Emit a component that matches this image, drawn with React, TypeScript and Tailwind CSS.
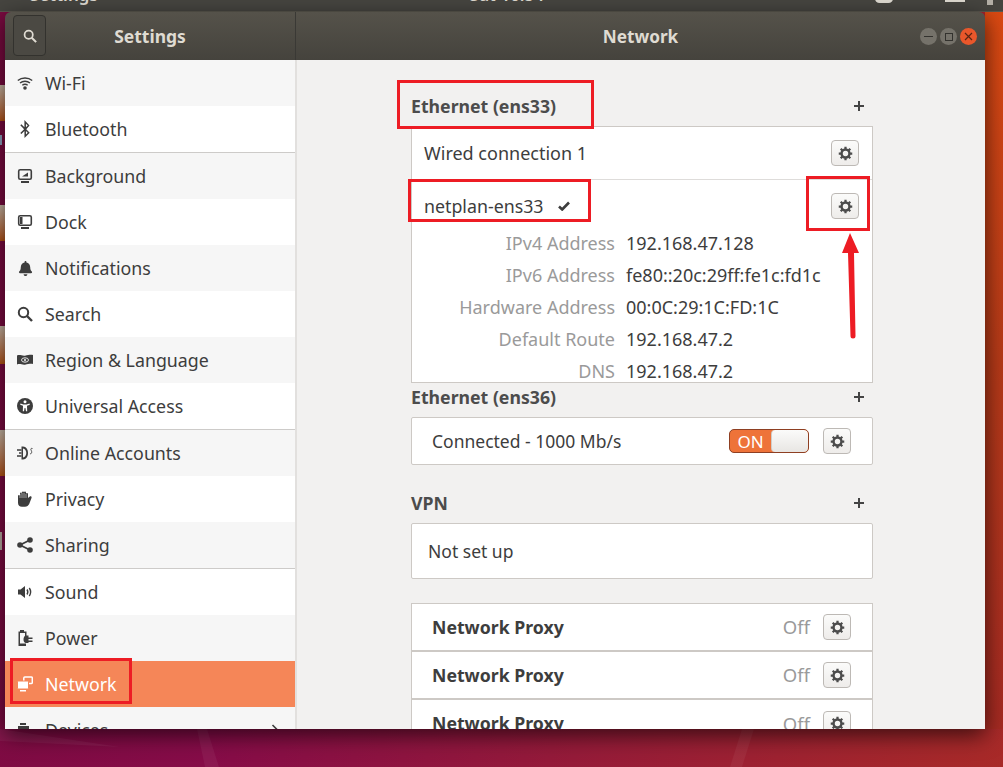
import type { ReactNode } from 'react';
import { FaBell, FaBluetoothB } from 'react-icons/fa';

const FONT = "font-['Noto_Sans',sans-serif]";

const Svg = ({ children, size = 16 }: { children: ReactNode; size?: number }) => (
  <svg width={size} height={size} viewBox="0 0 16 16" fill="currentColor">{children}</svg>
);

const Gear = () => (
  <Svg size={15}>
    <circle cx="8" cy="8" r="4.2" fill="none" stroke="currentColor" strokeWidth="2.6" />
    <g stroke="currentColor" strokeWidth="2.4">
      <path d="M8 .8v3M8 12.2v3M.8 8h3M12.2 8h3M2.9 2.9l2.1 2.1M11 11l2.1 2.1M13.1 2.9 11 5M5 11l-2.1 2.1" />
    </g>
  </Svg>
);

const SearchIcon = ({ size = 16 }: { size?: number }) => (
  <Svg size={size}>
    <circle cx="6.500" cy="6.500" r="4.700" fill="none" stroke="currentColor" strokeWidth="2" />
    <path d="M10 10l5 5" stroke="currentColor" strokeWidth="2.400" />
  </Svg>
);

const WifiIcon = () => (
  <Svg>
    <g fill="none" stroke="currentColor" strokeWidth="1.400">
      <path d="M.8 5.500c4-3.400 10.400-3.400 14.400 0" />
      <path d="M3 8c2.800-2.300 7.200-2.300 10 0" />
      <path d="M5.300 10.300c1.500-1.100 3.900-1.100 5.400 0" />
    </g>
    <circle cx="8" cy="13" r="1.800" />
  </Svg>
);

const HandIcon = () => (
  <Svg>
    <path d="M1 5a1 1 0 0 1 2 0V2.500a1 1 0 0 1 2 0V1.500a1 1 0 0 1 2 0V1.500a1 1 0 0 1 2 0v1.500a1 1 0 0 1 2 0v4l1.800-1.400c.8-.7 2.400.2 1.700 1.300L12.200 13c-.8 1.500-2.200 2.800-4.200 2.800H5c-2.500 0-4-1.500-4-4z" />
    <path d="M3 3v4M5 2v5M7 2v5M9 3v4" stroke="#fff" strokeWidth=".5" />
  </Svg>
);

const ShareIcon = () => (
  <Svg>
    <path d="M13 3 3 8l10 5" fill="none" stroke="currentColor" strokeWidth="1.800" />
    <circle cx="13" cy="3" r="2.800" />
    <circle cx="3" cy="8" r="2.800" />
    <circle cx="13" cy="13" r="2.800" />
  </Svg>
);

const SoundIcon = () => (
  <Svg>
    <path d="M1 5.500h2.500L8 2v12l-4.500-3.500H1z" />
    <path d="M10 5.500c1 1.500 1 3.500 0 5M12.300 4c1.600 2.400 1.600 5.600 0 8" fill="none" stroke="currentColor" strokeWidth="1.400" />
  </Svg>
);

const Monitor = ({ inner }: { inner: ReactNode }) => (
  <Svg>
    <rect x="1.700" y="1.700" width="12.600" height="9.600" rx="1.500" fill="none" stroke="currentColor" strokeWidth="1.600" />
    {inner}
    <path d="M4 13h8v2H4z" />
  </Svg>
);

const RegionIcon = () => (
  <Svg>
    <path d="M0 3.500c3-1.200 5 .6 8 .2s5-1.200 8-.7v9c-3-.5-5 .3-8 .7s-5-1.400-8-.2z" />
    <ellipse cx="8" cy="8" rx="3.500" ry="2.200" fill="none" stroke="#f6f6f6" strokeWidth=".9" />
    <circle cx="8" cy="8" r="1" fill="#f6f6f6" />
  </Svg>
);

const AccessIcon = () => (
  <Svg>
    <circle cx="8" cy="8" r="8" />
    <circle cx="8" cy="3.800" r="1.500" fill="#fff" />
    <path d="M3.500 5.600 6.400 6.400h3.200l2.900-.8.300 1.200-2.800 1 .2 5.400H9L8.400 10h-.8L7 13.200H5.800L6 7.800l-2.800-1z" fill="#fff" />
  </Svg>
);

const AccountsIcon = () => (
  <Svg>
    <path d="M4.500 1.500h1.500c3.200 0 5 3 5 6.500s-1.800 6.500-5 6.500H4.500z" />
    <path d="M6 3.500c2 .4 3.300 2.300 3.300 4.500S8 12.100 6 12.500z" fill="#f6f6f6" />
    <path d="M0 5h4.500M2 8h2.500M0 11h4.500" stroke="currentColor" strokeWidth="1.400" />
    <path d="M15.500 3.500c-1.500-.5-2 .5-1.500 1.500s1 2 .5 3-1 .8-1.500.5" fill="none" stroke="currentColor" strokeWidth=".9" />
  </Svg>
);

const PowerIcon = () => (
  <Svg>
    <path d="M3 0h4v1.500h2.500V6H8V3H3v10.500h6V16H1.500V1.500H3z" />
    <path d="M9 6.500h2.500v2h4V10h-4v1.500h4V13h-4v1H9c-1.500 0-2.500-1.500-2.500-3.500S7.500 6.500 9 6.500z" transform="translate(0 -1)" />
  </Svg>
);

const NetworkIcon = () => (
  <Svg>
    <rect x="6.800" y="1" width="8.500" height="6.500" rx="1" fill="none" stroke="currentColor" strokeWidth="1.500" />
    <path d="M1.500 5h9a1 1 0 0 1 1 1v6a1 1 0 0 1-1 1h-9a1 1 0 0 1-1-1V6a1 1 0 0 1 1-1z" stroke="#f58658" strokeWidth="1" />
    <path d="M3 14h6v1.500H3z" />
  </Svg>
);

const DevicesIcon = () => (
  <Svg>
    <path d="M3 1h6v2H3zM1 4h11v6H1zM3 11h12v3H3z" />
  </Svg>
);

const NAV: { name: string; icon: ReactNode; bg: string; sep?: boolean }[] = [
  { name: 'Wi-Fi', icon: <WifiIcon />, bg: 'bg-[#f6f6f6]' },
  { name: 'Bluetooth', icon: <FaBluetoothB size={18} />, bg: 'bg-white', sep: true },
  { name: 'Background', icon: <Monitor inner={<path d="M5 8.500h6V4.500z" />} />, bg: 'bg-[#f6f6f6]' },
  { name: 'Dock', icon: <Monitor inner={<path d="M3 3h2.500v7H3z" />} />, bg: 'bg-white' },
  { name: 'Notifications', icon: <FaBell size={15} />, bg: 'bg-[#f6f6f6]' },
  { name: 'Search', icon: <SearchIcon />, bg: 'bg-white' },
  { name: 'Region & Language', icon: <RegionIcon />, bg: 'bg-[#f6f6f6]' },
  { name: 'Universal Access', icon: <AccessIcon />, bg: 'bg-white', sep: true },
  { name: 'Online Accounts', icon: <AccountsIcon />, bg: 'bg-[#f6f6f6]' },
  { name: 'Privacy', icon: <HandIcon />, bg: 'bg-white' },
  { name: 'Sharing', icon: <ShareIcon />, bg: 'bg-[#f6f6f6]', sep: true },
  { name: 'Sound', icon: <SoundIcon />, bg: 'bg-white' },
  { name: 'Power', icon: <PowerIcon />, bg: 'bg-[#f6f6f6]' },
  { name: 'Network', icon: <NetworkIcon />, bg: 'bg-[#f58658]' },
];

const GearButton = () => (
  <div className="flex h-[26px] w-[28px] shrink-0 items-center justify-center rounded-[4px] border border-[#bdb9b5] bg-gradient-to-b from-[#fbfbfa] to-[#eeecea] text-[#4c4c4c]">
    <Gear />
  </div>
);

const SectionTitle = ({ title }: { title: string }) => (
  <div className="flex items-center justify-between pr-[9px]">
    <span className="text-[17.700px] font-bold leading-[20px] text-[#4c4c4c]">{title}</span>
    <span className="h-[10px] w-[10px] bg-[linear-gradient(#444,#444),linear-gradient(#444,#444)] bg-[length:100%_2px,2px_100%] bg-center bg-no-repeat" />
  </div>
);

const DETAILS = [
  ['IPv4 Address', '192.168.47.128'],
  ['IPv6 Address', 'fe80::20c:29ff:fe1c:fd1c'],
  ['Hardware Address', '00:0C:29:1C:FD:1C'],
  ['Default Route', '192.168.47.2'],
  ['DNS', '192.168.47.2'],
];

const Proxy = ({ clip }: { clip?: boolean }) => (
  <div className={`flex h-[48px] shrink-0 items-center justify-between border border-[#cdc9c5] bg-white pl-[20px] pr-[21px] ${clip ? 'border-b-0' : ''}`}>
    <span className="text-[17.700px] font-bold text-[#3d3d3d]">Network Proxy</span>
    <div className="flex items-center gap-[13px]">
      <span className="text-[18.500px] text-[#9a9a9a]">Off</span>
      <GearButton />
    </div>
  </div>
);

export default function App() {
  return (
    <div className={`${FONT} relative h-[767px] w-[1003px] overflow-hidden bg-[linear-gradient(100deg,#7a0b40_0%,#860c48_30%,#941a3a_60%,#a82a28_100%)]`}>
      {/* desktop icons peeking out on the left */}
      <div className="absolute left-0 top-[85px] h-[36px] w-[5px] bg-gradient-to-b from-[#c9b9a8] to-[#b8560f]" />
      <div className="absolute left-0 top-[205px] h-[36px] w-[5px] bg-gradient-to-b from-[#c9b9a8] to-[#b8560f]" />
      <div className="absolute left-0 top-[326px] h-[38px] w-[5px] bg-gradient-to-b from-[#c9b9a8] to-[#b8560f]" />
      <div className="absolute left-0 top-[430px] h-[46px] w-[5px] bg-gradient-to-b from-[#c9b9a8] to-[#b8560f]" />
      <div className="absolute left-0 top-[135px] h-[10px] w-[2px] bg-[#8fa3c0]" />
      <div className="absolute left-0 top-[532px] h-[18px] w-[2px] bg-[#b7a9a0]" />
      <div className="absolute right-0 top-0 h-[729px] w-[18px] bg-gradient-to-b from-[#dc4a12] via-[#b63a18] to-[#a52a22]" />

      {/* wallpaper streaks under the window */}
      <svg className="absolute left-0 top-[729px]" width="1003" height="38" fill="#ffffff" fillOpacity="0.05">
        <path d="M0 0 120 18 0 12zM197 0h10l12 38h-14zM742 0h12l-12 38h-12z" />
      </svg>

      {/* top bar, mostly cut off */}
      <div className="relative flex h-[12px] items-start overflow-hidden border-b border-[#5b584f] bg-[#464540] text-[#dfdbd2]">
        <span className="ml-[30px] mt-[-15px] shrink-0 whitespace-nowrap text-[17px] font-semibold leading-[20px]">Settings</span>
        <span className="ml-[372px] mt-[-15px] shrink-0 whitespace-nowrap text-[17px] font-semibold leading-[20px]">Sat 16:54</span>
        <span className="ml-[331px] mt-[-6px] h-[9px] w-[18px] shrink-0 rounded-full bg-[#dfdbd2]" />
        <span className="ml-[52px] h-[2px] w-[20px] shrink-0 bg-[#dfdbd2]" />
        <span className="ml-[22px] h-[5px] w-[6px] shrink-0 bg-[#b5b1a8]" />
      </div>

      <div className="relative ml-[5px] flex h-[717px] w-[980px] flex-col overflow-hidden rounded-t-[6px] shadow-[0_6px_22px_rgba(0,0,0,0.65)]">
        <header className="flex h-[48px] shrink-0 bg-gradient-to-b from-[#55524a] to-[#45433d] text-[#dfdbd2]">
          <div className="relative flex w-[291px] shrink-0 items-center justify-center border-r border-[#3a3935] pt-[1px]">
            <div className="absolute left-[8px] top-[3px] flex h-[41px] w-[33px] items-center justify-center rounded-[4px] border border-[#33322e] bg-[#4b4943] text-[#dfdbd2]">
              <SearchIcon size={14} />
            </div>
            <span className="text-[17.500px] font-bold">Settings</span>
          </div>
          <div className="relative flex flex-1 items-center justify-center pt-[1px]">
            <span className="text-[17.200px] font-bold">Network</span>
            <div className="absolute right-[8px] top-[16px] flex gap-[3px]">
              <span className="flex h-[17px] w-[17px] items-center justify-center rounded-full bg-[#75726a]"><span className="h-[1px] w-[9px] bg-[#33322e]" /></span>
              <span className="flex h-[17px] w-[17px] items-center justify-center rounded-full bg-[#75726a]"><span className="h-[8px] w-[8px] border border-[#33322e]" /></span>
              <span className="flex h-[17px] w-[17px] items-center justify-center rounded-full bg-[#e9572b]">
                <svg width="9" height="9" viewBox="0 0 9 9" stroke="#5a2412" strokeWidth="1.200"><path d="M1 1l7 7M8 1 1 8" /></svg>
              </span>
            </div>
          </div>
        </header>

        <div className="flex min-h-0 flex-1">
          <nav className="w-[292px] shrink-0 overflow-hidden border-r-2 border-[#e2e0de] bg-white">
            {NAV.map((n) => (
              <div key={n.name}>
                <div className={`flex h-[46px] items-center ${n.bg} ${n.name === 'Network' ? 'text-white' : 'text-[#3d3d3d]'}`}>
                  <span className="flex w-[40px] shrink-0 justify-center">{n.icon}</span>
                  <span className="text-[17.800px]">{n.name}</span>
                </div>
                {n.sep && <div className="h-[1px] bg-[#cdcbc9]" />}
              </div>
            ))}
            <div className="flex h-[46px] items-center bg-[#f6f6f6] text-[#3d3d3d]">
              <span className="flex w-[40px] shrink-0 justify-center"><DevicesIcon /></span>
              <span className="flex-1 text-[17.800px]">Devices</span>
              <svg className="mr-[16px]" width="8" height="12" viewBox="0 0 8 12" fill="none" stroke="currentColor" strokeWidth="1.600"><path d="M1.500 1l5 5-5 5" /></svg>
            </div>
          </nav>

          <main className="min-w-0 flex-1 overflow-hidden bg-[#f2f1f0] pl-[114px] pr-[112px] pt-[36px] text-[#3d3d3d]">
            <SectionTitle title="Ethernet (ens33)" />
            <div className="mt-[10px] h-[257px] overflow-hidden border border-[#cdc9c5] bg-white">
              <div className="flex h-[53px] items-center justify-between border-b border-[#dedcda] pl-[12px] pr-[13px]">
                <span className="text-[18px]">Wired connection 1</span>
                <GearButton />
              </div>
              <div className="flex h-[52px] items-center justify-between pl-[12px] pr-[13px]">
                <span className="flex items-center gap-[14px] text-[17.800px]">
                  netplan-ens33
                  <svg width="12" height="10" viewBox="0 0 12 10" fill="none" stroke="#3d3d3d" strokeWidth="2.600"><path d="M1 5.500 4.200 8.500 11 1.500" /></svg>
                </span>
                <GearButton />
              </div>
              <div className="mt-[-5px] grid grid-cols-[203px_1fr] gap-x-[11px] text-[18px] leading-[32px]">
                {DETAILS.map(([k, v]) => (
                  <div key={k} className="contents">
                    <span className="text-right text-[#9a9a9a]">{k}</span>
                    <span>{v}</span>
                  </div>
                ))}
              </div>
            </div>

            <div className="mt-[4px]"><SectionTitle title="Ethernet (ens36)" /></div>
            <div className="mt-[10px] flex h-[48px] items-center justify-between rounded-[2px] border border-[#cdc9c5] bg-white pl-[20px] pr-[21px]">
              <span className="text-[17.500px]">Connected - 1000 Mb/s</span>
              <div className="flex items-center gap-[14px]">
                <div className="flex h-[24px] w-[80px] overflow-hidden rounded-[5px] border border-[#8e3f22] bg-[#ee7339]">
                  <span className="flex w-[41px] items-center justify-center text-[17px] leading-none text-white">ON</span>
                  <span className="flex-1 rounded-[4px] border-l border-[#d0cdc9] bg-gradient-to-b from-[#fbfbfa] to-[#e8e6e3]" />
                </div>
                <GearButton />
              </div>
            </div>

            <div className="mt-[28px]"><SectionTitle title="VPN" /></div>
            <div className="mt-[10px] flex h-[56px] items-center rounded-[2px] border border-[#cdc9c5] bg-white pl-[16px]">
              <span className="text-[17.500px]">Not set up</span>
            </div>

            <div className="mt-[24px] flex flex-col">
              <Proxy />
              <Proxy />
              <Proxy clip />
            </div>
          </main>
        </div>
      </div>

      {/* red annotations drawn over the screenshot */}
      <div className="absolute left-[397px] top-[80px] h-[49px] w-[197px] border-[3px] border-[#ed1c24]" />
      <div className="absolute left-[408px] top-[179px] h-[43px] w-[183px] border-[3px] border-[#ed1c24]" />
      <div className="absolute left-[806px] top-[176px] h-[55px] w-[64px] border-[3px] border-[#ed1c24]" />
      <div className="absolute left-[10px] top-[658px] h-[46px] w-[122px] border-[3px] border-[#ed1c24]" />
      <svg className="absolute left-[840px] top-[230px]" width="24" height="112" viewBox="0 0 24 112" fill="#ed1c24">
        <path d="M10 3 2 23h6l2.500 83a2.500 2.500 0 0 0 5 0L14 23h5z" />
      </svg>
    </div>
  );
}
